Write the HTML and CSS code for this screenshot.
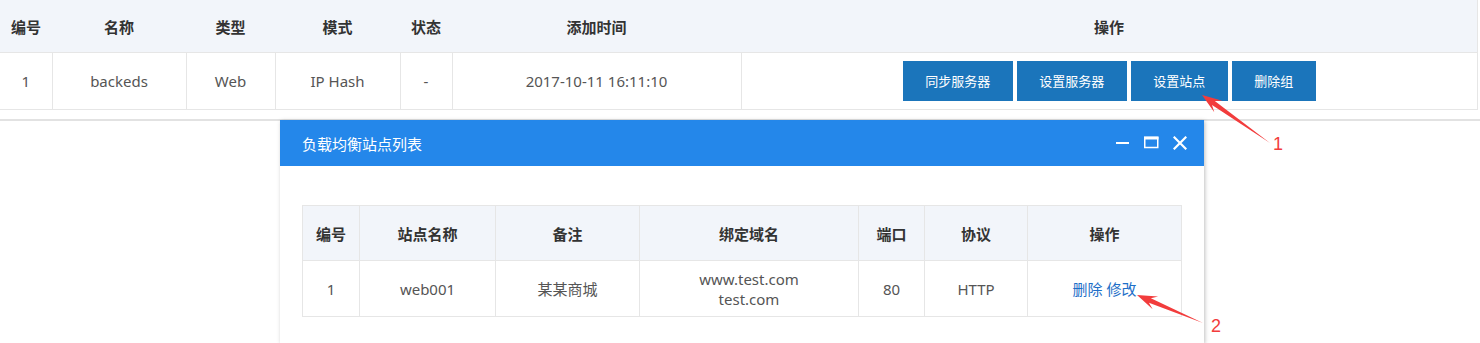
FILE: index.html
```html
<!DOCTYPE html>
<html lang="zh-CN">
<head>
<meta charset="utf-8">
<title>负载均衡</title>
<link rel="stylesheet" href="styles.css">
</head>
<body>
<div class="page">
  <table class="grid main">
    <colgroup>
      <col style="width:52px"><col style="width:134px"><col style="width:89px"><col style="width:125px"><col style="width:52px"><col style="width:289px"><col>
    </colgroup>
    <thead>
      <tr><th>编号</th><th>名称</th><th>类型</th><th>模式</th><th>状态</th><th>添加时间</th><th>操作</th></tr>
    </thead>
    <tbody>
      <tr>
        <td>1</td><td>backeds</td><td>Web</td><td>IP Hash</td><td>-</td><td>2017-10-11 16:11:10</td>
        <td class="ops">
          <span class="btn">同步服务器</span>
          <span class="btn">设置服务器</span>
          <span class="btn">设置站点</span>
          <span class="btn">删除组</span>
        </td>
      </tr>
    </tbody>
  </table>
</div>

<div class="modal">
  <div class="modal-head">
    <span class="modal-title">负载均衡站点列表</span>
    <div class="modal-tools">
      <svg class="tool" width="14" height="14" viewBox="0 0 14 14"><rect x="0" y="6" width="13" height="2" fill="#fff"/></svg>
      <svg class="tool" width="15" height="14" viewBox="0 0 15 14"><rect x="0.75" y="1.5" width="13" height="10" fill="none" stroke="#fff" stroke-width="1.5"/><rect x="0" y="0.5" width="14.5" height="3" fill="#fff"/></svg>
      <svg class="tool" width="14" height="14" viewBox="0 0 14 14"><path d="M1.5 1.5L12.5 12.5M12.5 1.5L1.5 12.5" stroke="#fff" stroke-width="2.2" stroke-linecap="square"/></svg>
    </div>
  </div>
  <div class="modal-body">
    <table class="grid sub">
      <colgroup>
        <col style="width:57px"><col style="width:136px"><col style="width:144px"><col style="width:219px"><col style="width:66px"><col style="width:103px"><col>
      </colgroup>
      <thead>
        <tr><th>编号</th><th>站点名称</th><th>备注</th><th>绑定域名</th><th>端口</th><th>协议</th><th>操作</th></tr>
      </thead>
      <tbody>
        <tr>
          <td>1</td><td>web001</td><td>某某商城</td><td class="domains">www.test.com<br>test.com</td><td>80</td><td>HTTP</td>
          <td><a class="link">删除</a> <a class="link">修改</a></td>
        </tr>
      </tbody>
    </table>
  </div>
</div>

<svg class="marks" width="1480" height="343" viewBox="0 0 1480 343">
  <polygon fill="#f23c3c" points="1202,95 1214.3,112.2 1212.0,105.1 1270,143 1214.8,101.1 1222.4,100.8"/>
  <text x="1273" y="150" class="mark-num">1</text>
  <polygon fill="#f23c3c" points="1137,295 1152.7,309.2 1148.9,302.8 1203,323 1150.9,298.2 1158.1,296.4"/>
  <text x="1211" y="332" class="mark-num">2</text>
</svg>
</body>
</html>
```

FILE: styles.css
```css
html, body {
  margin: 0;
  padding: 0;
  background: #fff;
}
body {
  width: 1480px;
  height: 343px;
  overflow: hidden;
  position: relative;
  font-family: "Noto Sans", "Noto Sans CJK SC", sans-serif;
  font-size: 15px;
  color: #555;
}
.page {
  height: 121px;
  border-bottom: 2px solid #e2e2e2;
  box-sizing: border-box;
}
.grid {
  border-collapse: collapse;
  table-layout: fixed;
}
.grid th, .grid td {
  text-align: center;
  padding: 0;
  border: 1px solid #e6e6e6;
}
.grid th {
  background: #f2f5fa;
  color: #333;
  font-weight: bold;
  font-family: "Noto Sans CJK SC", sans-serif;
  font-size: 15px;
}
.main {
  width: 1478px;
}
.main th {
  height: 52px;
  border-top: none;
  border-left: none;
  border-right: none;
}
.main th:last-child {
  border-right: 1px solid #e6e6e6;
}
.main td {
  height: 56px;
}
.main td:first-child {
  border-left: none;
}
.main td.ops {
  font-size: 0;
}
.btn {
  display: inline-block;
  height: 40px;
  line-height: 40px;
  padding: 0 22.5px;
  margin: 0 2px;
  background: #1b75bb;
  color: #fff;
  font-family: "Noto Sans CJK SC", sans-serif;
  font-size: 13px;
  vertical-align: middle;
}
.modal {
  position: absolute;
  left: 280px;
  top: 120px;
  width: 924px;
  height: 223px;
  overflow: hidden;
  background: #fff;
  box-shadow: 1px 1px 4px rgba(0,0,0,0.25);
}
.modal-head {
  height: 46px;
  background: #2487ea;
  display: flex;
  align-items: center;
  justify-content: space-between;
  padding: 0 17px 0 22px;
}
.modal-title {
  color: #fff;
  font-family: "Noto Sans CJK SC", sans-serif;
  font-size: 15px;
}
.modal-tools {
  display: flex;
  align-items: center;
  gap: 14px;
}
.tool {
  display: block;
}
.modal-body {
  padding: 39px 22px 0;
}
.sub {
  width: 880px;
}
.sub th {
  height: 54px;
}
.sub td {
  height: 55px;
  line-height: 20px;
}
.link {
  color: #1e6fc8;
  font-family: "Noto Sans CJK SC", sans-serif;
  cursor: pointer;
}
.marks {
  position: absolute;
  left: 0;
  top: 0;
  pointer-events: none;
}
.mark-num {
  fill: #f23c3c;
  font-family: "Liberation Sans", sans-serif;
  font-size: 18px;
}
```
